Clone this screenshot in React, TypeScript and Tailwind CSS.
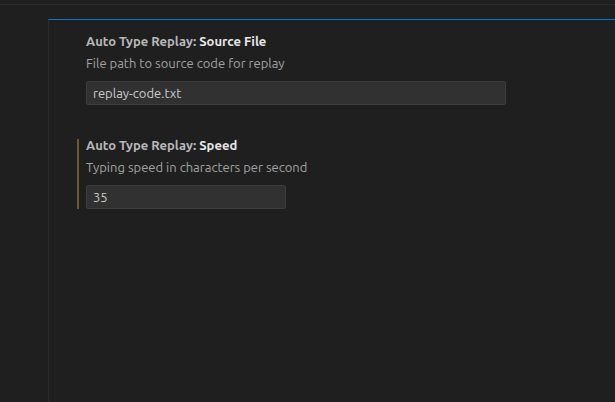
import { useState } from "react";

interface SettingProps {
  category: string;
  name: string;
  description: string;
  value: string;
  width: string;
  modified?: boolean;
}

function SettingItem({ category, name, description, value, width, modified }: SettingProps) {
  const [text, setText] = useState(value);

  return (
    <div
      className={`ml-[28px] border-l-2 pl-[7px] ${modified ? "border-[#6e5a1f]" : "border-transparent"}`}
    >
      <div className="-mt-0.5 text-[13px] leading-4">
        <span className="font-semibold text-[#b8b8b8]">{category}: </span>
        <span className="font-bold text-[#e7e7e7]">{name}</span>
      </div>
      <p className="mt-[6px] text-[13px] leading-4 text-[#a3a3a3]">{description}</p>
      <input
        value={text}
        onChange={(event) => setText(event.target.value)}
        spellCheck={false}
        className={`mt-[10px] block h-6 ${width} rounded-[2px] border border-[#3c3c3c] bg-[#313131] px-[6px] text-[13px] text-[#cccccc] outline-none`}
      />
    </div>
  );
}

export default function App() {
  return (
    <div className="flex h-[402px] w-[615px] flex-col overflow-hidden bg-[#1f1f1f] font-['Ubuntu','Noto_Sans',sans-serif]">
      <div className="mt-1 h-px bg-[#2a2a2a]" />
      <div className="ml-[48px] mt-[14px] flex flex-1 flex-col border-l border-t border-l-[#2b2b2b] border-t-[#0078d4]">
        <div className="mt-[15px] flex flex-col gap-[34px]">
          <SettingItem
            category="Auto Type Replay"
            name="Source File"
            description="File path to source code for replay"
            value="replay-code.txt"
            width="w-[420px]"
          />
          <SettingItem
            category="Auto Type Replay"
            name="Speed"
            description="Typing speed in characters per second"
            value="35"
            width="w-[200px]"
            modified
          />
        </div>
      </div>
    </div>
  );
}
